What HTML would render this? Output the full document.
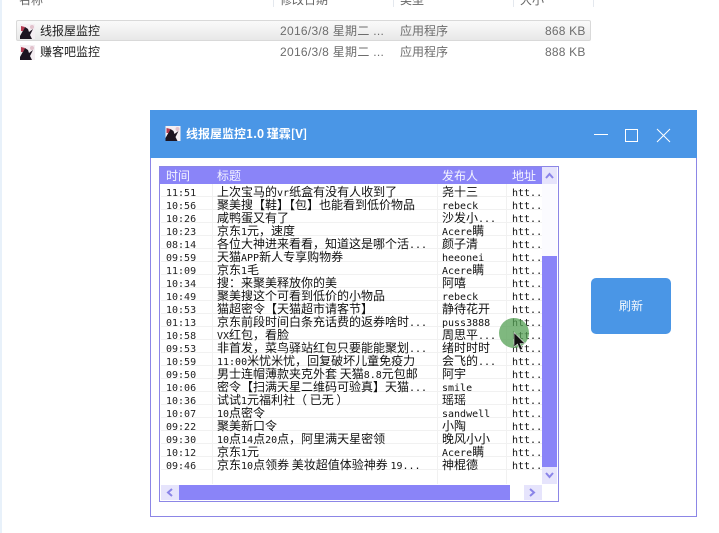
<!DOCTYPE html>
<html><head><meta charset="utf-8">
<style>
html,body{margin:0;padding:0;background:#fff}
#p{position:relative;width:719px;height:533px;overflow:hidden;background:#fff;font-family:"Liberation Sans","Noto Sans CJK SC",sans-serif}
#p div,#p span,#p svg{position:absolute}
.h{top:-7px;font-size:12px;line-height:14px;color:#666;white-space:nowrap}
.s{top:0;width:1px;height:7px;background:#e4e8ee}
.e{font-size:12px;line-height:14px;color:#6d6d6d;white-space:nowrap}
.n{font-size:12px;line-height:14px;color:#222;white-space:nowrap;left:40px}
#l{left:159px;top:166px;width:398px;height:334px;border:1px solid #8c86e6;background:#fff}
.r{left:1px;width:381px;height:12px;border-bottom:1px solid #f1f1f1;font:12px/13px "WenQuanYi Zen Hei","Noto Sans CJK SC",sans-serif;color:#111;white-space:nowrap}
.r span{top:1px}
.a{left:5px}.b{left:56px}.c{left:281px}.d{left:351px}
i{font:10px/13px "DejaVu Sans Mono",monospace;font-style:normal}
.a i{color:#222}
.hd span{top:0;color:#f4f4ff;font:12px/17px "WenQuanYi Zen Hei","Noto Sans CJK SC",sans-serif}
</style></head><body><div id="p">
<div style="left:0;top:0;width:2px;height:533px;background:#e8f1fa"></div>
<div class="h" style="left:19px">名称</div><div class="h" style="left:280px">修改日期</div><div class="h" style="left:400px">类型</div><div class="h" style="left:520px">大小</div>
<div class="s" style="left:273px"></div><div class="s" style="left:393px"></div><div class="s" style="left:513px"></div><div class="s" style="left:593px"></div>
<div style="left:16px;top:20px;width:573px;height:19px;border:1px solid #d9d9d9;border-radius:2px;background:linear-gradient(#fafafa,#e8e8e8)"></div>
<svg style="left:20px;top:24px" width="15" height="15" viewBox="0 0 15 15"><rect width="15" height="15" fill="#f4eef2"/><path d="M0 12L5 3l3 2 1 3 4-3-3 6 2 4H0z" fill="#1c1420"/><path d="M1 2l4 1-2 4H1z" fill="#b33a50"/><circle cx="12" cy="3" r="2" fill="#e2c2cc"/></svg>
<div class="n" style="top:24px">线报屋监控</div>
<div class="e" style="left:280px;top:24px;letter-spacing:.3px">2016/3/8 星期二 ...</div>
<div class="e" style="left:400px;top:24px">应用程序</div>
<div class="e" style="left:545px;top:24px;letter-spacing:.2px">868 KB</div>
<svg style="left:20px;top:45px" width="15" height="15" viewBox="0 0 15 15"><rect width="15" height="15" fill="#f4eef2"/><path d="M0 12L5 3l3 2 1 3 4-3-3 6 2 4H0z" fill="#1c1420"/><path d="M1 2l4 1-2 4H1z" fill="#b33a50"/><circle cx="12" cy="3" r="2" fill="#e2c2cc"/></svg>
<div class="n" style="top:45px">赚客吧监控</div>
<div class="e" style="left:280px;top:45px;letter-spacing:.3px">2016/3/8 星期二 ...</div>
<div class="e" style="left:400px;top:45px">应用程序</div>
<div class="e" style="left:545px;top:45px;letter-spacing:.2px">888 KB</div>

<div style="left:150px;top:110px;width:545px;height:406px;border:1px solid #8c86e6;border-top:0;background:#fff"></div>
<div style="left:150px;top:110px;width:547px;height:48px;background:#4a96e6"></div>
<svg style="left:165px;top:126px" width="16" height="15" viewBox="0 0 15 15"><rect width="15" height="15" fill="#f4eef2"/><path d="M0 12L5 3l3 2 1 3 4-3-3 6 2 4H0z" fill="#1c1420"/><path d="M1 2l4 1-2 4H1z" fill="#b33a50"/><circle cx="12" cy="3" r="2" fill="#e2c2cc"/></svg>
<div style="left:186px;top:127px;color:#fff;font:bold 12px/14px 'WenQuanYi Zen Hei','Noto Sans CJK SC',sans-serif;white-space:nowrap">线报屋监控1.0 瑾霖[V]</div>
<svg style="left:590px;top:125px" width="85" height="20" fill="none" stroke="#fff" stroke-width="1"><path d="M4 9.500H18"/><rect x="35.500" y="4.500" width="12" height="12"/><path d="M67 4l13 13M80 4L67 17"/></svg>

<div id="l">
<div style="left:0;top:0;width:382px;height:17px;background:#8a84f8"></div>
<div class="r hd" style="top:0;height:17px;border:0">
<span class="a">时间</span><span class="b">标题</span><span class="c">发布人</span><span class="d">地址</span></div>
<div style="left:52px;top:17px;width:1px;height:300px;background:#f1f1f1"></div>
<div style="left:277px;top:17px;width:1px;height:300px;background:#f1f1f1"></div>
<div style="left:346px;top:17px;width:1px;height:300px;background:#f1f1f1"></div>

<div class="r" style="top:17px"><span class="a"><i>11:51</i></span><span class="b">上次宝马的<i>vr</i>纸盒有没有人收到了</span><span class="c">尧十三</span><span class="d"><i>htt..</i></span></div>
<div class="r" style="top:30px"><span class="a"><i>10:56</i></span><span class="b">聚美搜【鞋】【包】也能看到低价物品</span><span class="c"><i>rebeck</i></span><span class="d"><i>htt..</i></span></div>
<div class="r" style="top:43px"><span class="a"><i>10:26</i></span><span class="b">咸鸭蛋又有了</span><span class="c">沙发小<i>...</i></span><span class="d"><i>htt..</i></span></div>
<div class="r" style="top:56px"><span class="a"><i>10:23</i></span><span class="b">京东<i>1</i>元，速度</span><span class="c"><i>Acere</i>瞒</span><span class="d"><i>htt..</i></span></div>
<div class="r" style="top:69px"><span class="a"><i>08:14</i></span><span class="b">各位大神进来看看，知道这是哪个活<i>...</i></span><span class="c">颜子清</span><span class="d"><i>htt..</i></span></div>
<div class="r" style="top:82px"><span class="a"><i>09:59</i></span><span class="b">天猫<i>APP</i>新人专享购物券</span><span class="c"><i>heeonei</i></span><span class="d"><i>htt..</i></span></div>
<div class="r" style="top:95px"><span class="a"><i>11:09</i></span><span class="b">京东<i>1</i>毛</span><span class="c"><i>Acere</i>瞒</span><span class="d"><i>htt..</i></span></div>
<div class="r" style="top:108px"><span class="a"><i>10:34</i></span><span class="b">搜：来聚美释放你的美</span><span class="c">阿嘻</span><span class="d"><i>htt..</i></span></div>
<div class="r" style="top:121px"><span class="a"><i>10:49</i></span><span class="b">聚美搜这个可看到低价的小物品</span><span class="c"><i>rebeck</i></span><span class="d"><i>htt..</i></span></div>
<div class="r" style="top:134px"><span class="a"><i>10:53</i></span><span class="b">猫超密令【天猫超市请客节】</span><span class="c">静待花开</span><span class="d"><i>htt..</i></span></div>
<div class="r" style="top:147px"><span class="a"><i>01:13</i></span><span class="b">京东前段时间白条充话费的返券啥时<i>...</i></span><span class="c"><i>puss3888</i></span><span class="d"><i>htt..</i></span></div>
<div class="r" style="top:160px"><span class="a"><i>10:58</i></span><span class="b"><i>VX</i>红包，看脸</span><span class="c">周思平<i>...</i></span><span class="d"><i>htt..</i></span></div>
<div class="r" style="top:173px"><span class="a"><i>09:53</i></span><span class="b">非首发，菜鸟驿站红包只要能能聚划<i>...</i></span><span class="c">绪时时时</span><span class="d"><i>htt..</i></span></div>
<div class="r" style="top:186px"><span class="a"><i>10:59</i></span><span class="b"><i>11:00</i>米忧米忧，回复破坏儿童免疫力</span><span class="c">会飞的<i>...</i></span><span class="d"><i>htt..</i></span></div>
<div class="r" style="top:199px"><span class="a"><i>09:50</i></span><span class="b">男士连帽薄款夹克外套 天猫<i>8.8</i>元包邮</span><span class="c">阿宇</span><span class="d"><i>htt..</i></span></div>
<div class="r" style="top:212px"><span class="a"><i>10:06</i></span><span class="b">密令【扫满天星二维码可验真】天猫<i>...</i></span><span class="c"><i>smile</i></span><span class="d"><i>htt..</i></span></div>
<div class="r" style="top:225px"><span class="a"><i>10:36</i></span><span class="b">试试<i>1</i>元福利社（ 已无 ）</span><span class="c">瑶瑶</span><span class="d"><i>htt..</i></span></div>
<div class="r" style="top:238px"><span class="a"><i>10:07</i></span><span class="b"><i>10</i>点密令</span><span class="c"><i>sandwell</i></span><span class="d"><i>htt..</i></span></div>
<div class="r" style="top:251px"><span class="a"><i>09:22</i></span><span class="b">聚美新口令</span><span class="c">小陶</span><span class="d"><i>htt..</i></span></div>
<div class="r" style="top:264px"><span class="a"><i>09:30</i></span><span class="b"><i>10</i>点<i>14</i>点<i>20</i>点，阿里满天星密领</span><span class="c">晚风小小</span><span class="d"><i>htt..</i></span></div>
<div class="r" style="top:277px"><span class="a"><i>10:12</i></span><span class="b">京东<i>1</i>元</span><span class="c"><i>Acere</i>瞒</span><span class="d"><i>htt..</i></span></div>
<div class="r" style="top:290px"><span class="a"><i>09:46</i></span><span class="b">京东<i>10</i>点领券 美妆超值体验神券 <i>19...</i></span><span class="c">神棍德</span><span class="d"><i>htt..</i></span></div>

<div style="left:382px;top:0;width:15px;height:317px;background:#fbfbff"></div>
<div style="left:382px;top:0;width:15px;height:17px;background:#e6e4fc"></div>
<div style="left:382px;top:89px;width:15px;height:211px;background:#8a84f8"></div>
<div style="left:382px;top:300px;width:15px;height:17px;background:#e6e4fc"></div>
<svg style="left:385px;top:5px" width="9" height="7" fill="none" stroke="#8a84e8" stroke-width="2"><path d="M1 6l3.500-4L8 6"/></svg>
<svg style="left:385px;top:305px" width="9" height="7" fill="none" stroke="#8a84e8" stroke-width="2"><path d="M1 1l3.500 4L8 1"/></svg>
<div style="left:1px;top:318px;width:18px;height:15px;background:#e6e4fc"></div>
<div style="left:19px;top:318px;width:331px;height:15px;background:#8a84f8"></div>
<div style="left:364px;top:318px;width:18px;height:15px;background:#e6e4fc"></div>
<svg style="left:6px;top:321px" width="7" height="9" fill="none" stroke="#8a84e8" stroke-width="2"><path d="M6 1L2 4.500 6 8"/></svg>
<svg style="left:369px;top:321px" width="7" height="9" fill="none" stroke="#8a84e8" stroke-width="2"><path d="M1 1l4 3.500L1 8"/></svg>
</div>

<div style="left:591px;top:278px;width:80px;height:56px;background:#4a96e6;border-radius:5px"></div>
<div style="left:591px;top:299px;width:80px;text-align:center;color:#f2f7fd;font:12px/14px 'WenQuanYi Zen Hei','Noto Sans CJK SC',sans-serif">刷新</div>
<div style="left:499px;top:318px;width:30px;height:30px;border-radius:50%;background:rgba(84,160,84,.75)"></div>
<svg style="left:513px;top:332px" width="14" height="20"><path d="M1 0.500V15l3.500-3 2.500 6 2.500-1-2.500-5.500H12z" fill="#111" stroke="#ddd" stroke-width=".6"/></svg>
</div></body></html>
